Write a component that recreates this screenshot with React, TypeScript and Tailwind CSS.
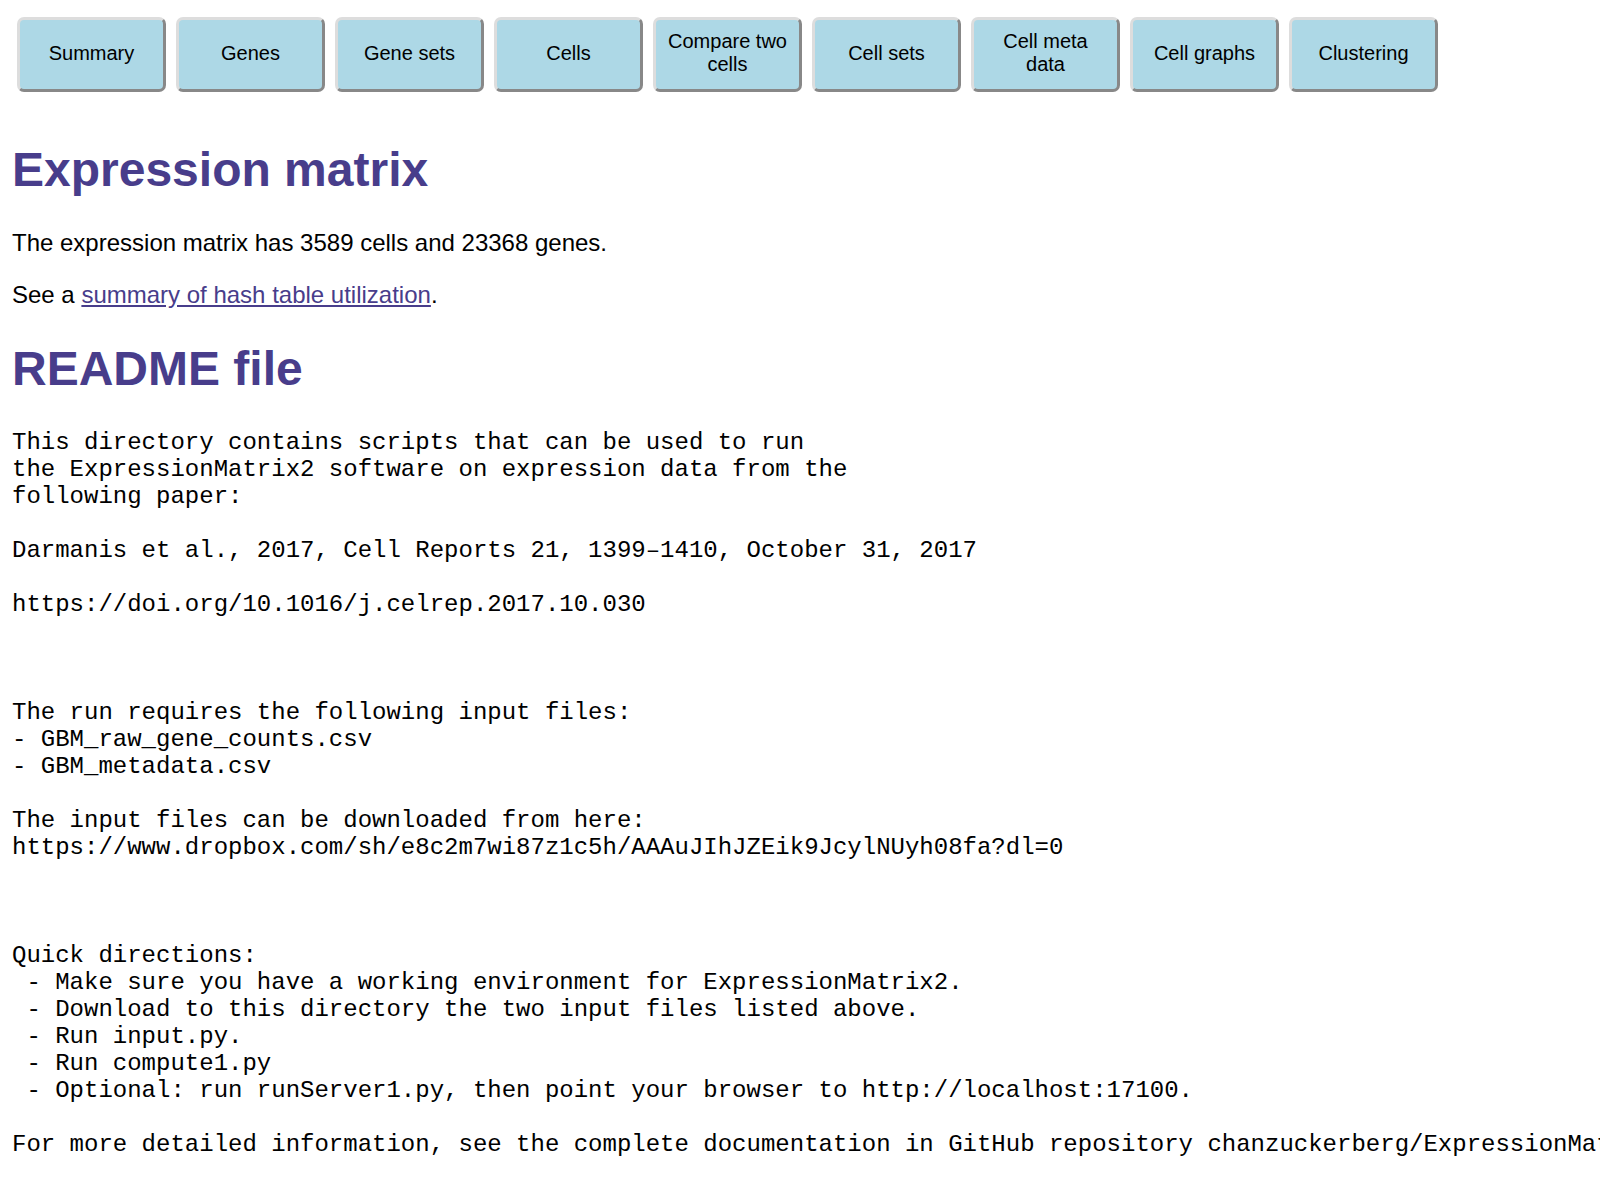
const tabs = [
  "Summary",
  "Genes",
  "Gene sets",
  "Cells",
  "Compare two cells",
  "Cell sets",
  "Cell meta data",
  "Cell graphs",
  "Clustering",
];

const readme = `This directory contains scripts that can be used to run
the ExpressionMatrix2 software on expression data from the
following paper:

Darmanis et al., 2017, Cell Reports 21, 1399–1410, October 31, 2017

https://doi.org/10.1016/j.celrep.2017.10.030



The run requires the following input files:
- GBM_raw_gene_counts.csv
- GBM_metadata.csv

The input files can be downloaded from here:
https://www.dropbox.com/sh/e8c2m7wi87z1c5h/AAAuJIhJZEik9JcylNUyh08fa?dl=0



Quick directions:
 - Make sure you have a working environment for ExpressionMatrix2.
 - Download to this directory the two input files listed above.
 - Run input.py.
 - Run compute1.py
 - Optional: run runServer1.py, then point your browser to http://localhost:17100.

For more detailed information, see the complete documentation in GitHub repository chanzuckerberg/ExpressionMatrix2.`;

export default function App() {
  return (
    <div className="min-h-screen w-full overflow-hidden bg-white px-[12px] pt-[17px] text-[24px] text-black font-['Liberation_Sans',Arial,sans-serif]">
      {/* NAV BUTTONS */}
      <nav className="flex gap-[10px] pl-[5px]">
        {tabs.map((t) => (
          <button
            key={t}
            className="flex h-[75px] w-[149px] shrink-0 items-center justify-center rounded-[7px] border-[3px] border-t-[#dddddd] border-l-[#dddddd] border-b-[#888888] border-r-[#888888] bg-[#add8e6] px-2 pb-[3px] text-center text-[20px] leading-[23px] text-black"
          >
            {t}
          </button>
        ))}
      </nav>

      <h1 className="mt-[50px] text-[48px] font-bold leading-[55px] text-[#483d8b]">
        Expression matrix
      </h1>

      <p className="mt-[32px] leading-[27.6px]">
        The expression matrix has 3589 cells and 23368 genes.
      </p>
      <p className="mt-[24px] leading-[27.6px]">
        See a{" "}
        <a href="#" className="text-[#483d8b] underline">
          summary of hash table utilization
        </a>
        .
      </p>

      {/* README */}
      <h1 className="mt-[33px] text-[48px] font-bold leading-[55px] text-[#483d8b]">
        README file
      </h1>

      <pre className="mt-[33px] whitespace-pre text-[24px] leading-[27px] font-['Liberation_Mono','Courier_New',monospace]">
        {readme}
      </pre>
    </div>
  );
}
